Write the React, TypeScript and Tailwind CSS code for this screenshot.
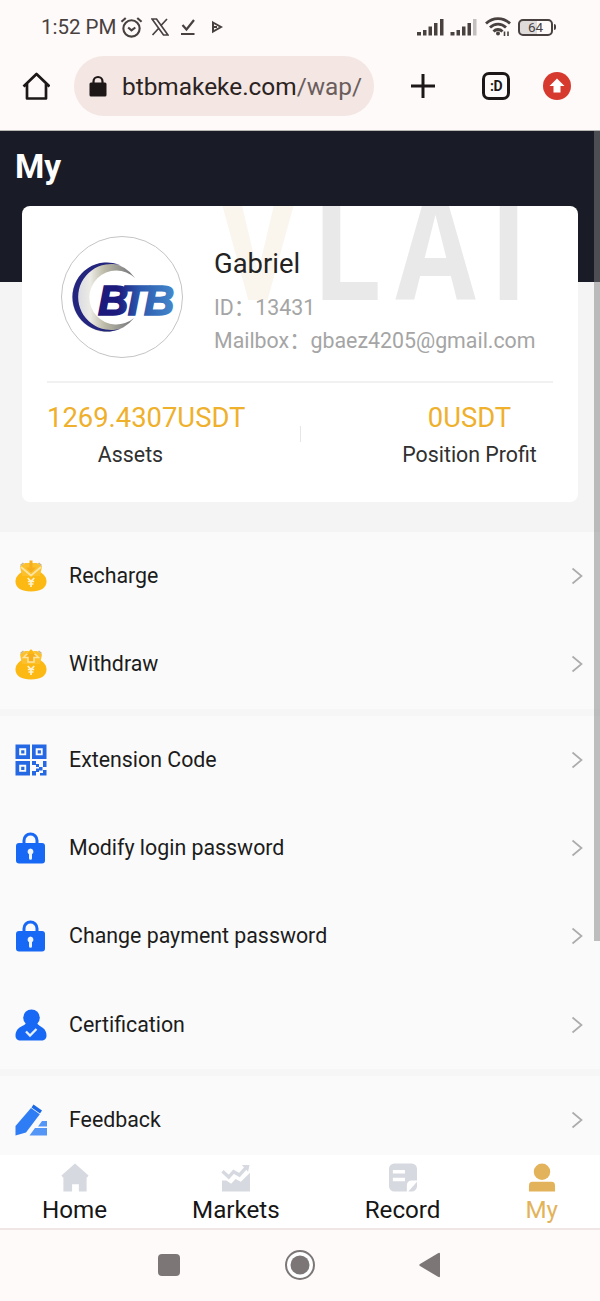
import type { ReactNode } from 'react'

interface MenuItem {
  label: string
  icon: ReactNode
}

interface Tab {
  label: string
  icon: ReactNode
  active?: boolean
}

function MoneyBagIcon({ up = false }: { up?: boolean }) {
  return (
    <svg viewBox="0 0 32 32" className="size-8 shrink-0">
      <path d="M7 12C2.500 14.500.5 18 .5 21.500c0 6.500 6 10 15.500 10s15.500-3.500 15.500-10c0-3.500-2-7-6.500-9.500z" fill="#fcb813" />
      <path d="M5 6.500L10 3h12l5 3.500L25 16H7z" fill="#fcc02c" />
      <path d="M5.500 5.500L8.500 3M26.500 5.500l-3-2.500" stroke="#c9b57f" strokeWidth="1.600" />
      {up ? (
        <>
          <path d="M8.500 9.500L16 2l7.500 7.500H19V14h-6V9.500z" fill="#f7ae1c" stroke="#fde4a0" strokeWidth="1.500" />
          <path d="M11.500 6L16 1.200 20.500 6z" fill="#fcb813" />
        </>
      ) : (
        <>
          <path d="M6 7l10 8.500L26 7" fill="none" stroke="#fde4a0" strokeWidth="1.800" />
          <path d="M14.500.5h3v7H21l-5 5-5-5h3.500z" fill="#f7ae1c" />
        </>
      )}
      <path d="M12.700 18l3.300 3.300 3.300-3.300M16 21v6M12.800 21.500h6.400M13.500 24h5" fill="none" stroke="#fff2cf" strokeWidth="1.700" />
    </svg>
  )
}

function QrIcon() {
  return (
    <svg viewBox="0 0 32 32" className="size-8 shrink-0" fill="#2468e4">
      <path
        fillRule="evenodd"
        d="M.5.5H15V15H.5zM4.200 4.200v7h7v-7zM17 .5h14.500V15H17zM20.700 4.200v7h7v-7zM.5 17H15v14.500H.5zM4.200 20.700v7h7v-7z"
      />
      <path d="M6.200 6.200h3.200v3.200H6.200zM22.700 6.200h3.200v3.200h-3.200zM6.200 22.700h3.200v3.200H6.200z" />
      <path d="M17 17h4v3h3v3h3.500v3.500H24V23h-3v-2h-4zM28 17h3.500v6H28zM17 27h4v4.500h-4zM21 24.500h3V28h-3zM28 26h3.500v5.500H25V29h3z" />
    </svg>
  )
}

function LockIcon() {
  return (
    <svg viewBox="0 0 32 32" className="size-8 shrink-0">
      <path d="M9 13V8.500a6.500 6.500 0 0 1 13 0V13" fill="none" stroke="#1769f5" strokeWidth="3" />
      <rect x="1" y="11" width="29" height="20.500" rx="3" fill="#1769f5" />
      <path d="M15.500 16.500a3.100 3.100 0 0 1 1.500 5.700v4a1.500 1.500 0 0 1-3 0v-4a3.100 3.100 0 0 1 1.500-5.700z" fill="#eef5ff" />
    </svg>
  )
}

function CertificationIcon() {
  return (
    <svg viewBox="0 0 32 32" className="size-8 shrink-0" fill="#1769f5">
      <circle cx="16.500" cy="8.700" r="8.300" />
      <path d="M11 14h11c.5 2 3.500 3 6 5 2.500 2 3.500 4.500 3.500 7.500 0 3.500-2 5-5 5h-21c-3 0-5-1.500-5-5 0-3 1-5.500 3.500-7.500 2.500-2 6.500-3 7-5z" />
      <path d="M11 22.500l4 4 6.500-6.500" fill="none" stroke="#e6f0ff" strokeWidth="2.300" />
    </svg>
  )
}

function FeedbackIcon() {
  return (
    <svg viewBox="0 0 32 32" className="size-8 shrink-0">
      <path d="M18.500.5l8.500 6-2 3-8.500-6z" fill="#1b69e6" />
      <path d="M16 4l8.800 6.300L11 28.500.5 31.500V22z" fill="#2f7df4" />
      <path d="M27 17h5v5.500h-9zM20 24h12v7.500H14.500z" fill="#5496f6" />
    </svg>
  )
}

function BtbLogo() {
  return (
    <svg viewBox="0 0 122 122" className="size-[122px] shrink-0">
      <defs>
        <linearGradient id="btb" gradientUnits="userSpaceOnUse" x1="37" x2="113" y1="0" y2="0">
          <stop offset="0.250" stopColor="#1c1a7c" />
          <stop offset="0.550" stopColor="#2c59ae" />
          <stop offset="1" stopColor="#4488cb" />
        </linearGradient>
        <linearGradient id="moon" gradientUnits="userSpaceOnUse" x1="18" x2="74" y1="0" y2="0">
          <stop offset="0" stopColor="#dcdde2" />
          <stop offset="0.200" stopColor="#ecebe6" />
          <stop offset="0.450" stopColor="#bdbba8" />
          <stop offset="1" stopColor="#6f7078" />
        </linearGradient>
      </defs>
      <circle cx="61" cy="61" r="60.500" fill="#fff" stroke="#c4c4c4" />
      <path d="M74 42A34.500 34.500 0 1 0 73 82A27 27 0 1 1 74 42z" fill="url(#moon)" />
      <path d="M60 29.500A34.500 34.500 0 1 0 60 92.500A33 33 0 1 1 60 29.500z" fill="#23257f" />
      <text
        x="37 60 83"
        y="79"
        fill="url(#btb)"
        stroke="url(#btb)"
        strokeWidth="1.600"
        className="font-['Liberation_Sans',sans-serif] text-[42px] font-bold italic"
      >
        BTB
      </text>
    </svg>
  )
}

function Watermark() {
  return (
    <svg viewBox="0 0 320 95" className="absolute top-0 left-[190px] h-[95px] w-[320px] font-['Roboto',sans-serif] text-[158px] font-bold">
      <text x="5" y="94" textLength="82" lengthAdjust="spacingAndGlyphs" fill="#faf6ee">V</text>
      <text x="103" y="94" textLength="65" lengthAdjust="spacingAndGlyphs" fill="#e9e9e9">L</text>
      <text x="183" y="94" textLength="81" lengthAdjust="spacingAndGlyphs" fill="#e9e9e9">A</text>
      <text x="279" y="94" textLength="35" lengthAdjust="spacingAndGlyphs" fill="#e9e9e9">I</text>
    </svg>
  )
}

function StatusBar() {
  return (
    <div className="flex h-[54px] items-center pr-[44px] pl-[41px] text-[#48413f]">
      <span className="w-[79px] pt-px text-[20.500px] whitespace-nowrap">1:52 PM</span>
      <svg viewBox="0 0 24 24" className="size-[23px]" fill="none" stroke="currentColor" strokeWidth="2.200">
        <circle cx="12" cy="13" r="8.500" />
        <path d="M1.500 6L6 2M22.500 6L18 2M8.500 12l3.500 3 4-3" />
      </svg>
      <svg viewBox="0 0 18 18" className="ml-2 h-[18px] w-[18px]" fill="none" stroke="currentColor" strokeWidth="1.700">
        <path d="M1 1h4.500l11.500 16h-4.500zM16 1l-6.500 7M7.500 10.500L1.500 17" />
      </svg>
      <svg viewBox="0 0 16 18" className="ml-[11px] h-[18px] w-4" fill="none" stroke="currentColor" strokeWidth="2.200">
        <path d="M2.500 7l4 4.500L14 2M1 16h13.500" />
      </svg>
      <svg viewBox="0 0 12 14" className="ml-[15px] h-[14px] w-3" fill="none" stroke="currentColor" strokeWidth="2">
        <path d="M2 2.500l8 4.500-8 4.500zM2 7h4" />
      </svg>
      <svg viewBox="0 0 61 18" className="ml-auto h-[18px] w-[61px]" fill="currentColor">
        <path d="M0 14h4v3.500H0zM6 12h3.500v5.500H6zM11.500 8.500H15v9h-3.500zM17 5h3.500v12.500H17zM23 1h3.500v16.500H23zM33.500 14h4v3.500h-4zM39.500 12H43v5.500h-3.500zM45 8.500h3.500v9H45zM50.500 5H54v12.500h-3.500z" />
        <path d="M56 1h3.500v16.500H56z" fill="#c3bfbf" />
      </svg>
      <svg viewBox="0 0 28 22" className="ml-[6px] h-[22px] w-7" fill="none" stroke="currentColor" strokeWidth="2.800">
        <path d="M2 7.500c7-6.500 17-6.500 24 0M6 11.500c4.500-4.500 11.500-4.500 16 0M9.500 15.500c2.500-2.700 6.500-2.700 9 0" />
        <circle cx="14" cy="17.500" r="2" fill="currentColor" stroke="none" />
        <path d="M20.500 20v-4.500M24 15.500V20" strokeWidth="1.600" />
      </svg>
      <div className="ml-[6px] flex h-[17px] w-[35px] items-center justify-center rounded-[5px] border-2 border-[#48413f] bg-linear-to-r from-[#dedbda] from-55% to-transparent to-55% text-[13.500px]">
        64
      </div>
      <div className="ml-px h-[6px] w-[2px] rounded-r bg-[#48413f]" />
    </div>
  )
}

function BrowserBar() {
  return (
    <div className="flex h-[77px] items-start border-b border-[#b9b8b4] pl-[22px] text-[#1d1718]">
      <svg viewBox="0 0 28 28" className="mt-[18px] size-7 shrink-0" fill="none" stroke="currentColor" strokeWidth="2.700" strokeLinejoin="round">
        <path d="M1.500 14.500L14.500 2l13 12.500M5 12v14.500h19V12" />
      </svg>
      <div className="mt-[2px] ml-[24px] flex h-[60px] w-[300px] shrink-0 items-center rounded-full bg-[#f3e6e3] pl-[15px]">
        <svg viewBox="0 0 18 22" className="h-[22px] w-[18px] shrink-0">
          <path d="M4.500 9V6.500a4.500 4.500 0 0 1 9 0V9" fill="none" stroke="currentColor" strokeWidth="2.200" />
          <rect x="0.500" y="7.500" width="17" height="14" rx="1.500" fill="currentColor" />
        </svg>
        <span className="ml-[15px] pt-[3px] text-[24.400px] whitespace-nowrap text-[#2b2322]">
          btbmakeke.com<span className="text-[#6a5d5c]">/wap/</span>
        </span>
      </div>
      <svg viewBox="0 0 24 24" className="mt-[20px] ml-[37px] size-6 shrink-0" stroke="currentColor" strokeWidth="3">
        <path d="M12 0v24M0 12h24" />
      </svg>
      <div className="mt-[18px] ml-[47px] flex size-[28px] shrink-0 items-center justify-center rounded-[7px] border-[3px] border-[#1d1718] text-[14px] leading-none font-bold tracking-[-0.500px]">
        :D
      </div>
      <svg viewBox="0 0 28 28" className="mt-[18px] ml-[33px] size-7 shrink-0">
        <circle cx="14" cy="14" r="14" fill="#d63a2f" />
        <path d="M14 6.500l7.500 7.500h-4v6.500h-7V14h-4z" fill="#fff" />
      </svg>
    </div>
  )
}

function ProfileCard() {
  return (
    <div className="relative mx-[22px] mt-[-76px] h-[296px] overflow-hidden rounded-lg bg-white px-[25px]">
      <Watermark />
      <div className="relative flex h-[177px] items-start border-b-2 border-[#f1f1f1] pt-[30px] pl-[14px]">
        <BtbLogo />
        <div className="ml-[31px] pt-[10px]">
          <p className="text-[27.400px] leading-[36px] text-[#232323]">Gabriel</p>
          <p className="mt-[10px] text-[21.350px] leading-[32px] whitespace-nowrap text-[#a5a5a5]">ID：13431</p>
          <p className="text-[21.350px] leading-[33px] whitespace-nowrap text-[#a5a5a5]">Mailbox：gbaez4205@gmail.com</p>
        </div>
      </div>
      <div className="flex justify-between pt-[15px]">
        <div className="flex w-[167px] flex-col items-center">
          <p className="self-start text-[27.400px] leading-[40px] whitespace-nowrap text-[#efb02c]">1269.4307USDT</p>
          <p className="text-[21.350px] leading-[34px] text-[#303030]">Assets</p>
        </div>
        <div className="mt-[28px] h-4 w-px bg-[#e6e6e6]" />
        <div className="w-[167px] text-center whitespace-nowrap">
          <p className="text-[27.400px] leading-[40px] text-[#efb02c]">0USDT</p>
          <p className="text-[21.350px] leading-[34px] text-[#303030]">Position Profit</p>
        </div>
      </div>
    </div>
  )
}

function MenuGroup({ items }: { items: MenuItem[] }) {
  return (
    <div className="bg-[#fafafa]">
      {items.map((item) => (
        <div key={item.label} className="flex h-[88.300px] items-center pr-[17px] pl-[15px]">
          {item.icon}
          <span className="ml-[22px] text-[21.350px] text-[#1c1c1c]">{item.label}</span>
          <svg viewBox="0 0 12 18" className="ml-auto h-[18px] w-3" fill="none" stroke="#acacac" strokeWidth="1.700">
            <path d="M1.500 1.500L10.500 9l-9 7.500" />
          </svg>
        </div>
      ))}
    </div>
  )
}

const groups: MenuItem[][] = [
  [
    { label: 'Recharge', icon: <MoneyBagIcon /> },
    { label: 'Withdraw', icon: <MoneyBagIcon up /> },
  ],
  [
    { label: 'Extension Code', icon: <QrIcon /> },
    { label: 'Modify login password', icon: <LockIcon /> },
    { label: 'Change payment password', icon: <LockIcon /> },
    { label: 'Certification', icon: <CertificationIcon /> },
  ],
  [{ label: 'Feedback', icon: <FeedbackIcon /> }],
]

const tabs: Tab[] = [
  {
    label: 'Home',
    icon: <path d="M15 .5L29 13l-1.500 2H27v14.500h-8V22h-7v7.500H3V15h-.5L1 13z" />,
  },
  {
    label: 'Markets',
    icon: (
      <>
        <path d="M.5 18l4.500 0 5 3.500 4.500-5 5.500 3 9.500-9.500v19.500H.5z" />
        <path d="M1 8.500l6.500 6 5-5.500 6 3.500L26 4" fill="none" stroke="currentColor" strokeWidth="3.500" />
        <path d="M21 2h8l-1.500 7z" />
      </>
    ),
  },
  {
    label: 'Record',
    icon: (
      <>
        <path d="M6 .5h18a5.500 5.500 0 0 1 5.500 5.500v12H24a5 5 0 0 0-5 5v6.500H6A5.500 5.500 0 0 1 .5 24V6A5.500 5.500 0 0 1 6 .5z" />
        <path d="M29.500 19.500V24a5.500 5.500 0 0 1-5.500 5.500h-3.500z" />
        <path d="M4.500 9H17M4.500 17H17" stroke="#fff" strokeWidth="3.500" />
      </>
    ),
  },
  {
    label: 'My',
    active: true,
    icon: (
      <>
        <circle cx="15" cy="9" r="8.500" />
        <path d="M5 19.500h20q3.500 0 3.500 4V29.500h-27v-6q0-4 3.500-4z" />
      </>
    ),
  },
]

function TabBar() {
  return (
    <div className="flex h-[75px] justify-between border-b-2 border-[#f0e6e6] bg-white pt-2 pr-[42px] pl-[42px]">
      {tabs.map((tab) => (
        <div key={tab.label} className={tab.active ? 'flex flex-col items-center text-[#e3b35b]' : 'flex flex-col items-center text-[#d6d9df]'}>
          <svg viewBox="0 0 30 30" className="size-[30px]" fill="currentColor">
            {tab.icon}
          </svg>
          <span className={tab.active ? 'mt-px text-[24.200px] leading-[35px]' : 'mt-px text-[24.200px] leading-[35px] text-[#161616]'}>
            {tab.label}
          </span>
        </div>
      ))}
    </div>
  )
}

function SystemNav() {
  return (
    <div className="flex h-[71px] items-center bg-[#fefafa] pb-[2px] pl-[158px] text-[#7c7677]">
      <div className="size-[22px] rounded-[4px] bg-[#7c7677]" />
      <svg viewBox="0 0 32 32" className="ml-[104px] size-8">
        <circle cx="16" cy="16" r="14" fill="#fff" stroke="currentColor" strokeWidth="2" />
        <circle cx="16" cy="16" r="9.500" fill="currentColor" />
      </svg>
      <svg viewBox="0 0 22 26" className="ml-[103px] h-[26px] w-[22px]" fill="currentColor">
        <path d="M1 12L19 1.200Q21 0 21 2v22q0 2-2 .8L1 14q-1.500-1 0-2z" />
      </svg>
    </div>
  )
}

export default function App() {
  return (
    <div className="flex h-[1301px] w-[600px] flex-col overflow-hidden bg-[#fefafa] font-['Roboto','Noto_Sans_CJK_SC',sans-serif]">
      <StatusBar />
      <BrowserBar />
      <main className="relative h-[1024px] overflow-hidden bg-[#f4f4f4]">
        <div className="h-[151px] bg-[#191c26] pt-[12px] pl-[15px]">
          <h1 className="text-[33.500px] leading-[48px] font-bold text-white">My</h1>
        </div>
        <ProfileCard />
        <div className="mt-[30px] flex flex-col gap-[7px] bg-[#f6f6f6]">
          {groups.map((items) => (
            <MenuGroup key={items[0].label} items={items} />
          ))}
        </div>
        <div className="absolute top-0 right-0 h-[810px] w-[6px] bg-[#808080]/50" />
      </main>
      <TabBar />
      <SystemNav />
    </div>
  )
}
